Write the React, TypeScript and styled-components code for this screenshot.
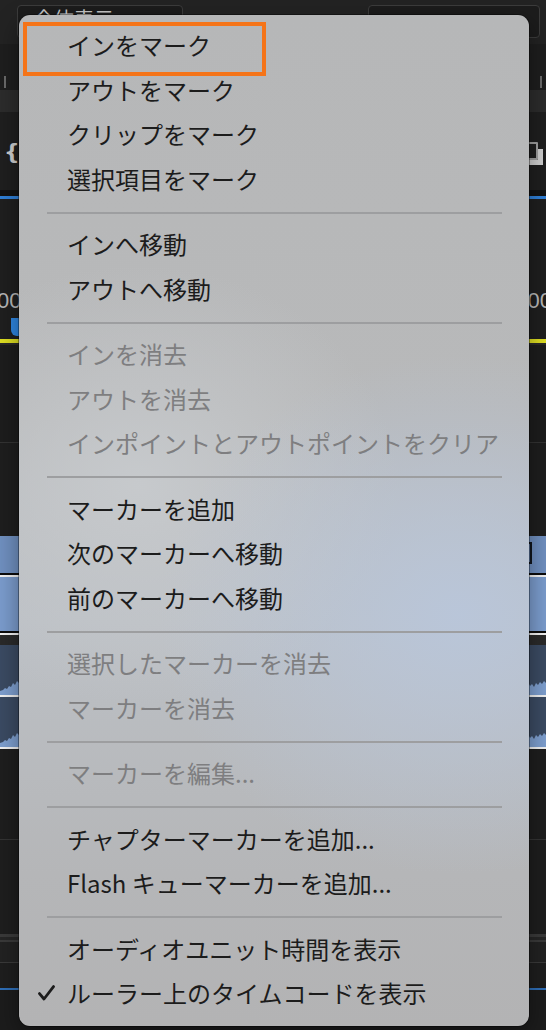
import React from 'react';
import styled, { createGlobalStyle } from 'styled-components';

const GlobalStyle = createGlobalStyle`
  html, body {
    margin: 0;
    padding: 0;
    background: #1e1e1e;
    overflow: hidden;
  }
`;

const Screen = styled.div`
  position: relative;
  width: 546px;
  height: 1030px;
  overflow: hidden;
  background: #1e1e1e;
  display: flex;
  flex-direction: column;
  font-family: 'Noto Sans CJK JP', 'Noto Sans', sans-serif;
`;

/* ---------- editor behind the menu ---------- */

const TopBar = styled.div`
  height: 44px;
  flex: none;
  background: #232323;
  display: flex;
  justify-content: space-between;
  align-items: flex-start;
  padding: 5px 6px 0 17px;
  box-sizing: border-box;
`;

const FieldBox = styled.div<{ $w: number }>`
  width: ${(p) => p.$w}px;
  height: 33px;
  box-sizing: border-box;
  border: 1px solid #3c3c3c;
  border-radius: 4px;
  background: #1c1c1c;
  color: #c8c8c8;
  font-size: 20px;
  line-height: 22px;
  padding: 2px 0 0 16px;
  display: flex;
  justify-content: space-between;
  overflow: hidden;
`;

const Chevron = styled.span`
  color: #9a9a9a;
  font-size: 12px;
  padding: 6px 10px 0 0;
`;

const Band = styled.div<{ $h: number; $bg: string }>`
  height: ${(p) => p.$h}px;
  flex: none;
  background: ${(p) => p.$bg};
  display: flex;
  justify-content: space-between;
  align-items: center;
  position: relative;
`;

const Tick = styled.span`
  width: 2px;
  height: 12px;
  background: #6a6a6a;
  margin: 0 4px;
`;

const Brace = styled.span`
  color: #d0d0d0;
  font-family: 'DejaVu Sans', sans-serif;
  font-size: 22px;
  font-weight: bold;
  padding-left: 4px;
`;

const ToolIcon = styled.span`
  width: 14px;
  height: 14px;
  border: 2px solid #9e9e9e;
  border-radius: 1px;
  box-shadow: 6px 6px 0 -1px #cfcfcf;
  margin-right: 8px;
`;

const TimeText = styled.span`
  color: #b8b8b8;
  font-family: 'Liberation Sans', sans-serif;
  font-size: 22px;
  margin-left: -3px;
  margin-right: -6px;
`;

const Playhead = styled.span`
  width: 9px;
  height: 18px;
  margin-left: 11px;
  background: #2f86e0;
  border-radius: 0 0 0 6px;
`;

const ClipBlock = styled.div<{ $h: number; $bg: string }>`
  height: ${(p) => p.$h}px;
  flex: none;
  background: ${(p) => p.$bg};
  border-bottom: 2px solid #f2f2f2;
  box-shadow: inset 0 -3px 0 -1px #0b0b0b;
  display: flex;
  justify-content: flex-end;
  align-items: flex-start;
`;

const ClipBracket = styled.span`
  width: 4px;
  height: 18px;
  margin: 6px 14px 0 0;
  border: 2px solid #11161e;
  border-left: none;
`;

const AudioBlock = styled.div`
  height: 50px;
  flex: none;
  background: #3b4b63;
  border-bottom: 2px solid #f2f2f2;
  position: relative;
  overflow: hidden;
  & > svg {
    position: absolute;
    left: 0;
    bottom: 0;
  }
`;

const Wave = () => (
  <svg width="546" height="22" viewBox="0 0 546 22">
    <path
      d="M0 22 L0 18 L3 17 L5 15 L7 16 L9 13 L11 14 L13 10 L15 12 L17 8 L19 10 L21 6 L23 9 L25 14 L27 22
         L520 22 L522 14 L524 10 L526 12 L528 9 L530 13 L532 11 L534 14 L536 10 L538 12 L540 9 L542 11 L544 8 L546 10 L546 22 Z"
      fill="#7e9fcf"
    />
  </svg>
);

/* ---------- context menu ---------- */

const Menu = styled.div`
  position: absolute;
  left: 19px;
  top: 15px;
  width: 510px;
  box-sizing: border-box;
  padding: 9px 0;
  border-radius: 11px;
  background:
    radial-gradient(ellipse 300px 260px at 440px 600px, rgba(185, 198, 218, 0.95), rgba(185, 198, 218, 0) 100%),
    radial-gradient(ellipse 260px 220px at 120px 470px, rgba(200, 203, 206, 0.9), rgba(200, 203, 206, 0) 100%),
    linear-gradient(180deg, #b6b7b8 0%, #b8b9ba 40%, #bcc0c5 60%, #b5b6b8 85%, #b3b3b4 100%);
  box-shadow: 0 0 0 1px rgba(0, 0, 0, 0.35), 0 8px 24px rgba(0, 0, 0, 0.4);
  display: flex;
  flex-direction: column;
`;

const Item = styled.div<{ $disabled?: boolean }>`
  height: 44.5px;
  flex: none;
  box-sizing: border-box;
  display: flex;
  align-items: center;
  padding: 0 0 2px 48px;
  position: relative;
  font-size: 24px;
  line-height: 1;
  color: ${(p) => (p.$disabled ? '#7e7e80' : '#1c1c1c')};
  white-space: nowrap;
`;

const CheckMark = styled.svg`
  position: absolute;
  left: 19px;
  top: 13px;
`;

const Separator = styled.div`
  height: 21px;
  flex: none;
  display: flex;
  align-items: center;
  padding: 0 27px 0 28px;
  &::after {
    content: '';
    flex: 1;
    height: 2px;
    background: #9d9ea0;
  }
`;

const Highlight = styled.div`
  position: absolute;
  left: 23px;
  top: 22px;
  width: 243px;
  height: 54px;
  box-sizing: border-box;
  border: 4px solid #f57418;
`;

type Entry = { label: string; disabled?: boolean; checked?: boolean } | 'sep';

const entries: Entry[] = [
  { label: 'インをマーク' },
  { label: 'アウトをマーク' },
  { label: 'クリップをマーク' },
  { label: '選択項目をマーク' },
  'sep',
  { label: 'インへ移動' },
  { label: 'アウトへ移動' },
  'sep',
  { label: 'インを消去', disabled: true },
  { label: 'アウトを消去', disabled: true },
  { label: 'インポイントとアウトポイントをクリア', disabled: true },
  'sep',
  { label: 'マーカーを追加' },
  { label: '次のマーカーへ移動' },
  { label: '前のマーカーへ移動' },
  'sep',
  { label: '選択したマーカーを消去', disabled: true },
  { label: 'マーカーを消去', disabled: true },
  'sep',
  { label: 'マーカーを編集...', disabled: true },
  'sep',
  { label: 'チャプターマーカーを追加...' },
  { label: 'Flash キューマーカーを追加...' },
  'sep',
  { label: 'オーディオユニット時間を表示' },
  { label: 'ルーラー上のタイムコードを表示', checked: true },
];

const App: React.FC = () => {
  return (
    <>
      <GlobalStyle />
      <Screen>
        <TopBar>
          <FieldBox $w={166}>全体表示</FieldBox>
          <FieldBox $w={172}>
            <span />
            <Chevron>⌄</Chevron>
          </FieldBox>
        </TopBar>
        <Band $h={30} $bg="#1e1e1e" />
        <Band $h={16} $bg="#1e1e1e">
          <Tick />
          <Tick />
        </Band>
        <Band $h={22} $bg="#2c2c2c" />
        <Band $h={78} $bg="#1f1f1f">
          <Brace>{'{'}</Brace>
          <ToolIcon />
        </Band>
        <Band $h={6} $bg="#121212" />
        <Band $h={3} $bg="#2f7fd6" />
        <Band $h={88} $bg="#1f1f1f" />
        <Band $h={28} $bg="#1f1f1f">
          <TimeText>00</TimeText>
          <TimeText>00</TimeText>
        </Band>
        <Band $h={24} $bg="#1f1f1f">
          <Playhead />
        </Band>
        <Band $h={4} $bg="#dede22" />
        <Band $h={2} $bg="#2a2a2a" />
        <Band $h={97} $bg="#1d1d1d" />
        <Band $h={1} $bg="#333333" />
        <Band $h={93} $bg="#1e1e1e" />
        <ClipBlock $h={39} $bg="#7090c0">
          <ClipBracket />
        </ClipBlock>
        <ClipBlock $h={56} $bg="#7b9ccd" />
        <Band $h={10} $bg="#2a2a2a" />
        <AudioBlock>
          <Wave />
        </AudioBlock>
        <AudioBlock>
          <Wave />
        </AudioBlock>
        <Band $h={90} $bg="#1e1e1e" />
        <Band $h={1} $bg="#343434" />
        <Band $h={94} $bg="#1e1e1e" />
        <Band $h={3} $bg="#3a3a3a" />
        <Band $h={3} $bg="#262626" />
        <Band $h={2} $bg="#3a3a3a" />
        <Band $h={20} $bg="#222222" />
        <Band $h={1} $bg="#3a3a3a" />
        <Band $h={25} $bg="#1e1e1e" />
        <Band $h={2} $bg="#2f6fb8" />
        <Band $h={60} $bg="#1c1c1c" />

        <Menu>
          {entries.map((e, i) =>
            e === 'sep' ? (
              <Separator key={i} />
            ) : (
              <Item key={i} $disabled={e.disabled}>
                {e.checked && (
                  <CheckMark width="17" height="16" viewBox="0 0 17 16">
                    <path
                      d="M1.5 8.6 L6 14 L15.5 1.6"
                      fill="none"
                      stroke="#1c1c1c"
                      strokeWidth="2.8"
                      strokeLinecap="round"
                      strokeLinejoin="round"
                    />
                  </CheckMark>
                )}
                {e.label}
              </Item>
            )
          )}
        </Menu>
        <Highlight />
      </Screen>
    </>
  );
};

export default App;
